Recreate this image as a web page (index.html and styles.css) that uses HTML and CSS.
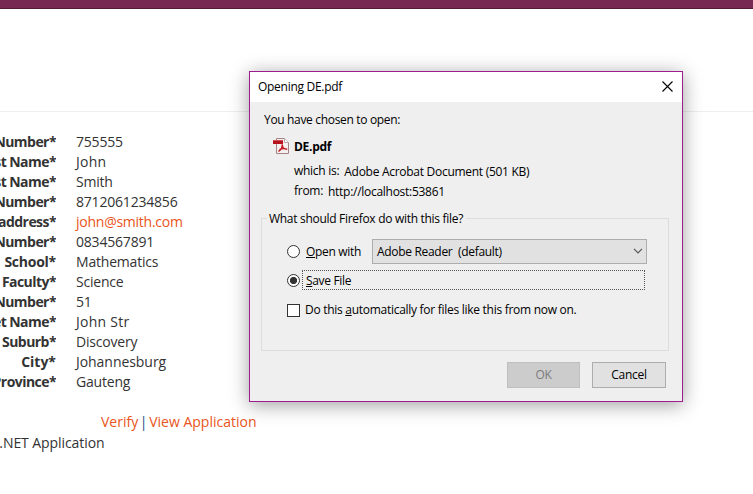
FILE: index.html
```
<!DOCTYPE html>
<html lang="en">
<head>
<meta charset="utf-8">
<title>Application details</title>
<link rel="stylesheet" href="styles.css">
</head>
<body>
<header class="navbar"></header>
<main class="page">
  <dl class="details">
    <dt>Number*</dt><dd>755555</dd>
    <dt>st Name*</dt><dd class="john">John</dd>
    <dt>st Name*</dt><dd>Smith</dd>
    <dt>Number*</dt><dd>8712061234856</dd>
    <dt>address*</dt><dd><a class="mail">john@smith.com</a></dd>
    <dt>Number*</dt><dd>0834567891</dd>
    <dt class="school">School*</dt><dd>Mathematics</dd>
    <dt>Faculty*</dt><dd>Science</dd>
    <dt>Number*</dt><dd>51</dd>
    <dt>et Name*</dt><dd class="john">John Str</dd>
    <dt>Suburb*</dt><dd>Discovery</dd>
    <dt class="city">City*</dt><dd class="joburg">Johannesburg</dd>
    <dt>Province*</dt><dd>Gauteng</dd>
  </dl>
  <p class="links"><a>Verify</a><span class="bar">|</span><a>View Application</a></p>
  <footer class="footer">P.NET Application</footer>
</main>

<section class="dialog" role="dialog">
  <div class="titlebar">
    <span>Opening DE.pdf</span>
    <svg class="close" width="11" height="11" viewBox="0 0 11 11"><path d="M.5.5l10 10M10.5.5l-10 10" fill="none" stroke="#000" stroke-width="1.1"/></svg>
  </div>
  <div class="content">
    <p class="intro">You have chosen to open:</p>
    <div class="file">
      <svg class="pdf" width="16" height="16" viewBox="0 0 16 16">
        <path d="M3.5.5h8l4 4v11h-12z" fill="#f5efef" stroke="#a58285"/>
        <path d="M11.5.5v4h4" fill="#fff" stroke="#bba7a9"/>
        <path d="M0 2h10v4H0z" fill="#b5121d"/>
        <path d="M0 2h10v1H0z" fill="#d44a50"/>
        <path d="M9.2 6.2c.2 2.800-1.200 5.500-3.700 7.300M9.200 7c.3 2.400 1.800 4.200 5 4.300M6.500 11.700c2.200-1.100 4.700-1.400 7.700-.6" fill="none" stroke="#c4111b" stroke-width="1.300"/>
      </svg>
      <div class="meta">
        <b>DE.pdf</b>
        <div class="line"><span>which is:</span><span class="value">Adobe Acrobat Document (501 KB)</span></div>
        <div class="line"><span>from:</span><span class="value">http://localhost:53861</span></div>
      </div>
    </div>
    <fieldset class="group">
      <legend>What should Firefox do with this file?</legend>
      <div class="option open">
        <i class="radio"></i><span class="label"><u>O</u>pen with</span>
        <div class="select"><span>Adobe Reader&nbsp; (default)</span>
          <svg class="arrow" width="10" height="6" viewBox="0 0 10 6"><path d="M1 .8l4 4 4-4" fill="none" stroke="#555" stroke-width="1.200"/></svg>
        </div>
      </div>
      <div class="option save">
        <i class="radio checked"></i><span class="focus"><u>S</u>ave File</span>
      </div>
      <div class="option auto">
        <i class="check"></i><span>Do this <u>a</u>utomatically for files like this from now on.</span>
      </div>
    </fieldset>
    <div class="buttons"><div class="button disabled">OK</div><div class="button">Cancel</div></div>
  </div>
</section>
</body>
</html>
```
FILE: styles.css
```
* { box-sizing: border-box; }
body {
  margin: 0;
  height: 494px;
  overflow: hidden;
  background: #fff;
  color: #333;
  font: 14px/20px "Open Sans", "Noto Sans", sans-serif;
  letter-spacing: -0.2px;
}
p, dl, dd { margin: 0; }
.navbar { height: 9px; background: #772953; border-bottom: 1px solid #4f1b37; }
.page { margin-top: 102px; border-top: 1px solid #eee; padding-top: 20px; }
.details { display: grid; grid-template-columns: 56px 1fr; column-gap: 20px; grid-auto-rows: 20px; }
.details dt {
  display: flex;
  justify-content: flex-end;
  overflow: hidden;
  white-space: nowrap;
  font-weight: 700;
  letter-spacing: -0.55px;
}
.details .school { letter-spacing: -0.25px; }
.details .city { letter-spacing: 0; }
.details .john { letter-spacing: 0.25px; }
.details .joburg { letter-spacing: -0.05px; }
.details .mail { letter-spacing: -0.25px; }
a { color: #e95420; }
.links { display: flex; margin: 20px 0 0 101px; letter-spacing: 0; }
.bar { width: 11px; text-align: center; color: #174e86; }
.footer { margin: 1px 0 0 -9px; white-space: nowrap; letter-spacing: -0.08px; }

.dialog {
  position: absolute;
  left: 249px;
  top: 71px;
  width: 434px;
  height: 331px;
  border: 1px solid #9b1d8f;
  background: #efefef;
  color: #000;
  font-size: 12px;
  line-height: 16px;
  letter-spacing: -0.28px;
  white-space: nowrap;
  box-shadow: 0 3px 18px rgba(0, 0, 0, .38);
}
.titlebar {
  height: 30px;
  padding: 0 9px 0 8px;
  display: flex;
  align-items: center;
  justify-content: space-between;
  background: #fff;
}
.close { margin-bottom: 2px; }
.content { padding: 10px 13px 0 11px; }
.intro { padding-left: 3px; letter-spacing: -0.33px; }
.file { display: flex; gap: 5px; margin: 10px 0 0 12px; }
.meta { display: flex; flex-direction: column; }
.meta b { line-height: 18px; }
.line { display: flex; gap: 5px; height: 20px; padding-top: 7px; }
.value { padding-top: 1px; }
.group {
  height: 141px;
  min-width: 0;
  margin: 14px 0 0;
  padding: 0 21px 0 25px;
  border: 1px solid #dcdcdc;
}
legend { margin-left: -20px; padding: 1px 3px 0 2px; height: 16px; letter-spacing: -0.3px; }
.option { display: flex; align-items: center; }
.radio, .check { flex: none; width: 13px; height: 13px; border: 1px solid #333; background: #fff; }
.radio { border-radius: 50%; }
.checked { background: radial-gradient(circle, #333 3.2px, #fff 4px); }
.open { height: 25px; margin-top: 13px; }
.label { width: 66px; margin-left: 6px; letter-spacing: -0.32px; }
.select {
  flex: 1;
  height: 25px;
  padding: 0 3px 0 4px;
  border: 1px solid #adadad;
  background: #e1e1e1;
  display: flex;
  align-items: center;
  justify-content: space-between;
  letter-spacing: -0.31px;
}
.arrow { margin-bottom: 2px; }
.save { height: 20px; margin-top: 6px; }
.focus { flex: 1; height: 20px; line-height: 19px; margin: 0 2px; padding-left: 3px; border: 1px dotted #555; letter-spacing: -0.33px; }
.auto { height: 16px; margin-top: 12px; gap: 5px; }
.buttons { display: flex; justify-content: flex-end; gap: 12px; margin: 11px 3px 0 0; }
.button {
  width: 74px;
  height: 26px;
  line-height: 24px;
  text-align: center;
  border: 1px solid #adadad;
  background: #e1e1e1;
}
.disabled { width: 73px; border-color: #bfbfbf; background: #ccc; color: #7b7b7b; }
```
